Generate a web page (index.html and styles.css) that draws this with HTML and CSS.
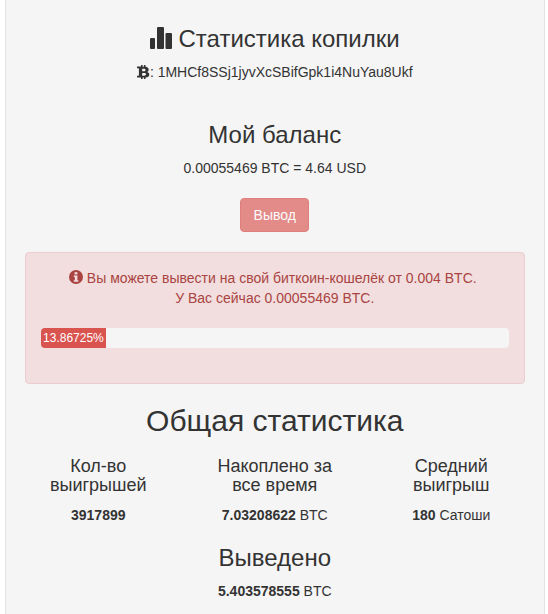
FILE: index.html
```html
<!DOCTYPE html>
<html lang="ru">
<head>
    <meta charset="UTF-8" />
    <title>Статистика копилки</title>
    <link rel="stylesheet" href="styles.css">
</head>
<body>
    <div class="well">
        <h2 class="title">
            <svg class="icon-chart" viewBox="0 0 22 22"><rect x="0" y="11" width="5" height="11" rx="1"/><rect x="7" y="0" width="7" height="22" rx="1"/><rect x="15.500" y="6" width="6.500" height="16" rx="1"/></svg>
            Статистика копилки
        </h2>
        <p class="address"><svg class="icon-btc" viewBox="0 0 13 14"><path fill-rule="evenodd" d="M4 0h1.600v1.700h1.300V0h1.600v1.800c2 .3 3.200 1.300 3.200 3 0 1-.5 1.700-1.400 2.100 1.300.4 2 1.300 2 2.500 0 2-1.400 2.900-3.800 3.100V14H6.900v-1.500H5.600V14H4v-1.500H0v-1.700h1.300c.4 0 .6-.2.600-.6V3.800c0-.4-.2-.6-.6-.6H0V1.500h4zM5.200 3.700v2.500h1.700c1 0 1.600-.4 1.600-1.250S7.900 3.700 6.900 3.700zM5.200 8v2.700h2c1.100 0 1.800-.5 1.800-1.350S8.300 8 7.200 8z"/></svg>: 1MHCf8SSj1jyvXcSBifGpk1i4NuYau8Ukf</p>

        <h3 class="balance-title">Мой баланс</h3>
        <p class="balance">0.00055469 BTC = 4.64 USD</p>
        <button class="btn-withdraw" disabled>Вывод</button>

        <div class="alert">
            <p class="alert-text">
                <svg class="icon-info" viewBox="0 0 14 14"><circle cx="7" cy="7" r="7"/><rect x="5.600" y="2.200" width="2.800" height="2.200" fill="#f2dede"/><path d="M4.800 5.500h3.600v4.700h1v1.600H4.800v-1.600h1V7.100h-1z" fill="#f2dede"/></svg>
                Вы можете вывести на свой биткоин-кошелёк от 0.004 BTC.&nbsp;<br>
                У Вас сейчас 0.00055469 BTC.
            </p>
            <div class="progress">
                <div class="progress-bar" style="width: 13.86725%">13.86725%</div>
            </div>
        </div>

        <h2 class="stats-title">Общая статистика</h2>
        <div class="stats">
            <div class="stat">
                <h4>Кол-во выигрышей</h4>
                <p><b>3917899</b></p>
            </div>
            <div class="stat">
                <h4>Накоплено за все время</h4>
                <p><b>7.03208622</b> BTC</p>
            </div>
            <div class="stat">
                <h4>Средний выигрыш</h4>
                <p><b>180</b> Сатоши</p>
            </div>
        </div>
        <h3 class="withdrawn-title">Выведено</h3>
        <p class="withdrawn"><b>5.403578555</b> BTC</p>
    </div>
</body>
</html>
```
FILE: styles.css
```css
* { box-sizing: border-box; }

html, body { height: 100%; }

body {
    margin: 0;
    padding: 0 3.500px 0 5px;
    background: #fff;
    color: #333;
    font-family: "Liberation Sans", Arial, sans-serif;
    font-size: 14px;
    line-height: 20px;
    overflow: hidden;
}

.well {
    height: 100%;
    padding: 19px;
    background: #f5f5f5;
    border-left: 1px solid #e3e3e3;
    border-right: 1px solid #e3e3e3;
    text-align: center;
}

.title {
    margin: 5px 0 9px;
    font-size: 24px;
    font-weight: 400;
    line-height: 29px;
}
.icon-chart { width: 22px; height: 22px; fill: #333; vertical-align: -2px; }

.address { margin: 0; }
.icon-btc { width: 13px; height: 14px; fill: #333; vertical-align: -2px; }

.balance-title {
    margin: 39px 0 10px;
    font-size: 24px;
    font-weight: 400;
    line-height: 27px;
}
.balance { margin: 0 0 10px; }

.btn-withdraw {
    display: block;
    margin: 20px auto 20px;
    padding: 6px 12px;
    height: 34px;
    width: 69px;
    border: 1px solid #d43f3a;
    border-radius: 4px;
    background: #d9534f;
    color: #fff;
    font: inherit;
    opacity: 0.65;
}

.alert {
    padding: 15px;
    margin-bottom: 20px;
    background: #f2dede;
    border: 1px solid #ebccd1;
    border-radius: 4px;
    color: #a94442;
}
.alert-text { margin: 0 0 20px; line-height: 20px; }
.icon-info { width: 14px; height: 14px; fill: #a94442; vertical-align: -1px; }

.progress {
    height: 20px;
    margin-bottom: 20px;
    background: #f5f5f5;
    border-radius: 4px;
    overflow: hidden;
}
.progress-bar {
    height: 100%;
    background: #d9534f;
    color: #fff;
    font-size: 12px;
    line-height: 20px;
    text-align: center;
    white-space: nowrap;
}

.stats-title {
    margin: 0 0 10px;
    font-size: 30px;
    font-weight: 400;
    line-height: 33px;
}

.stats { display: flex; gap: 30px; }
.stat { flex: 1; }
.stat h4 {
    margin: 10px 0;
    font-size: 18px;
    font-weight: 400;
    line-height: 19px;
}
.stat p { margin: 0 0 10px; }

.withdrawn-title {
    margin: 9px 0 10px;
    font-size: 24px;
    font-weight: 400;
    line-height: 27px;
}
.withdrawn { margin: 0; }
```
